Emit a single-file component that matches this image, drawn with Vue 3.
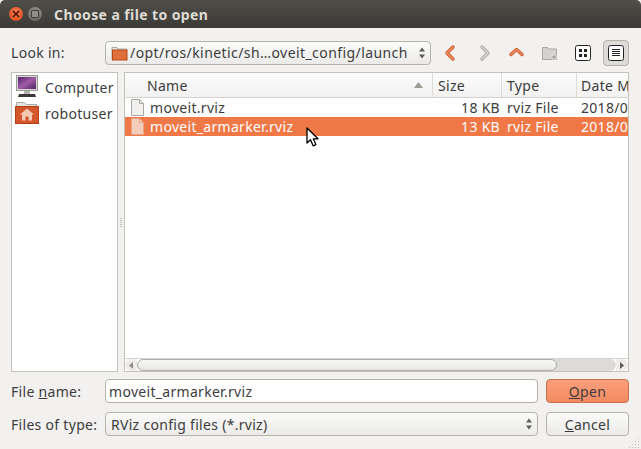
<template>
  <div class="dialog">
    <div class="titlebar">
      <span class="win-btn close">
        <svg width="10" height="10" viewBox="0 0 10 10"><path d="M2 2l6 6M8 2l-6 6" stroke="#4a1405" stroke-width="1.6" /></svg>
      </span>
      <span class="win-btn mini"><i></i></span>
      <span class="title">Choose a file to open</span>
    </div>

    <div class="content">
      <!-- look in -->
      <div class="row top-row">
        <label class="label">Look in:</label>
        <div class="combo path-combo">
          <svg class="folder" width="17" height="16" viewBox="0 0 17 16">
            <path d="M1 2.500h5l1 1.500h8.500v10.500H1z" fill="#e9e7e3" stroke="#a9a69f" />
            <rect x="1.500" y="5" width="14.500" height="10" fill="#e0703a" stroke="#b8441a" />
          </svg>
          <span class="combo-text">/opt/ros/kinetic/sh…oveit_config/launch</span>
          <svg class="spin" width="8" height="14" viewBox="0 0 8 14"><path d="M1 5.500l3-4 3 4zM1 8.500l3 4 3-4z" fill="#5e5c57" /></svg>
        </div>
        <div class="tools">
          <button class="tool">
            <svg width="16" height="18" viewBox="0 0 16 18">
              <path d="M10 3L4 9l6 6" fill="none" stroke="#cf5a2e" stroke-width="3.400" stroke-linejoin="round" stroke-linecap="round" />
              <path d="M10 3L4 9l6 6" fill="none" stroke="#f28f63" stroke-width="1.600" stroke-linejoin="round" stroke-linecap="round" />
            </svg>
          </button>
          <button class="tool">
            <svg width="16" height="18" viewBox="0 0 16 18">
              <path d="M6 3l6 6-6 6" fill="none" stroke="#aaa9a4" stroke-width="3.400" stroke-linejoin="round" stroke-linecap="round" />
              <path d="M6 3l6 6-6 6" fill="none" stroke="#d6d5d1" stroke-width="1.600" stroke-linejoin="round" stroke-linecap="round" />
            </svg>
          </button>
          <button class="tool">
            <svg width="18" height="14" viewBox="0 0 18 14">
              <path d="M3 8.500L8.500 3.500 14 8.500" fill="none" stroke="#cf5a2e" stroke-width="3.400" stroke-linejoin="round" stroke-linecap="round" />
              <path d="M3 8.500L8.500 3.500 14 8.500" fill="none" stroke="#f28f63" stroke-width="1.600" stroke-linejoin="round" stroke-linecap="round" />
            </svg>
          </button>
          <button class="tool">
            <svg width="18" height="16" viewBox="0 0 18 16">
              <path d="M1.500 2.500h5l1 1.500h8v10.500h-14z" fill="#d3d2ce" stroke="#a8a7a2" />
              <path d="M12 9h2v2h2v2h-2v2h-2v-2h-2v-2h2z" fill="#a6a5a0" stroke="#f2f1f0" stroke-width=".6" />
            </svg>
          </button>
          <button class="tool">
            <svg width="16" height="16" viewBox="0 0 16 16">
              <rect x=".5" y=".5" width="15" height="15" rx="2" fill="#fff" stroke="#24231f" />
              <path d="M4 4h3v3H4zM9 4h3v3H9zM4 9h3v3H4zM9 9h3v3H9z" fill="#24231f" />
            </svg>
          </button>
          <button class="tool active">
            <svg width="16" height="16" viewBox="0 0 16 16">
              <rect x=".5" y=".5" width="15" height="15" rx="2" fill="#fff" stroke="#24231f" />
              <path d="M4 4.500h8M4 6.500h8M4 8.500h8M4 10.500h8" stroke="#24231f" />
            </svg>
          </button>
        </div>
      </div>

      <!-- panes -->
      <div class="panes">
        <div class="sidebar">
          <div v-for="place in places" :key="place.name" class="place">
            <svg v-if="place.name === 'Computer'" width="24" height="24" viewBox="0 0 24 24">
              <rect x="1.500" y=".5" width="21" height="15" fill="#d8d8d4" stroke="#9a9a96" />
              <rect x="3" y="2" width="18" height="12" fill="url(#screen)" />
              <path d="M9 16h6v3H9z" fill="#b5b5b1" />
              <path d="M4 19h16l1 3H3z" fill="#3a3a38" />
              <defs>
                <linearGradient id="screen" x1="0" y1="0" x2="1" y2="1">
                  <stop offset="0" stop-color="#4f2468" />
                  <stop offset=".5" stop-color="#a35aa6" />
                  <stop offset="1" stop-color="#4b2560" />
                </linearGradient>
              </defs>
            </svg>
            <svg v-else width="24" height="24" viewBox="0 0 24 24">
              <path d="M1.500 1.500h8l2 2h10v19h-20z" fill="#e5e3df" stroke="#aba9a2" />
              <rect x=".5" y="5.500" width="23" height="17" fill="#d5562a" stroke="#b13f17" />
              <path d="M12 7.500l7 6h-2v6h-3.500v-4h-3v4H7v-6H5z" fill="#f3c9b2" />
            </svg>
            <span>{{ place.name }}</span>
          </div>
        </div>

        <div class="splitter"><i v-for="n in 5" :key="n"></i></div>

        <div class="list">
          <div class="header">
            <div class="col name-col">
              <span class="name-title">Name</span>
              <svg width="9" height="6" viewBox="0 0 9 6"><path d="M0 6l4.500-6L9 6z" fill="#9c9b96" /></svg>
            </div>
            <div class="col size-col">Size</div>
            <div class="col type-col">Type</div>
            <div class="col date-col">Date M</div>
          </div>
          <div class="rows">
            <div v-for="file in files" :key="file.name" class="file" :class="{ selected: file.selected }">
              <div class="cell name-col">
                <svg width="15" height="17" viewBox="0 0 15 17">
                  <path d="M1.500.5h8l4 4v12h-12z" :fill="file.selected ? '#f3cdbb' : '#f1f0ee'" :stroke="file.selected ? '#e9a487' : '#a9a8a4'" />
                  <path d="M9.500.5v4h4" fill="none" :stroke="file.selected ? '#e9a487' : '#a9a8a4'" />
                </svg>
                <span>{{ file.name }}</span>
              </div>
              <div class="cell size-col right">{{ file.size }}</div>
              <div class="cell type-col">rviz File</div>
              <div class="cell date-col">2018/0</div>
            </div>
          </div>
          <div class="hscroll">
            <span class="arrow-box left">
              <svg width="4" height="7" viewBox="0 0 4 7"><path d="M4 0v7L0 3.500z" fill="#8d8c87" /></svg>
            </span>
            <div class="track">
              <div class="thumb"></div>
            </div>
            <span class="arrow-box right">
              <svg width="4" height="7" viewBox="0 0 4 7"><path d="M0 0v7l4-3.500z" fill="#5e5c57" /></svg>
            </span>
          </div>
        </div>
      </div>

      <!-- file name -->
      <div class="row form-row">
        <label class="label">File <u>n</u>ame:</label>
        <input class="input" value="moveit_armarker.rviz" />
        <button class="btn primary"><u>O</u>pen</button>
      </div>
      <div class="row form-row">
        <label class="label">Files of type:</label>
        <div class="combo type-combo">
          <span class="combo-text">RViz config files (*.rviz)</span>
          <svg class="spin" width="8" height="14" viewBox="0 0 8 14"><path d="M1 5.500l3-4 3 4zM1 8.500l3 4 3-4z" fill="#5e5c57" /></svg>
        </div>
        <button class="btn"><u>C</u>ancel</button>
      </div>
    </div>

    <svg class="grip" width="11" height="11" viewBox="0 0 11 11">
      <path d="M9 1h1v1H9zM6 4h1v1H6zM9 4h1v1H9zM3 7h1v1H3zM6 7h1v1H6zM9 7h1v1H9zM0 10h1v1H0zM3 10h1v1H3zM6 10h1v1H6zM9 10h1v1H9z" fill="#c4c3bd" />
    </svg>
    <svg class="pointer" width="14" height="21" viewBox="0 0 14 21">
      <path d="M1 1v15l3.500-3.200 2.600 6 2.800-1.200-2.600-5.800H12z" fill="#fff" stroke="#000" stroke-width="1.300" stroke-linejoin="round" />
    </svg>
  </div>
</template>

<script setup>
const places = [{ name: 'Computer' }, { name: 'robotuser' }]

const files = [
  { name: 'moveit.rviz', size: '18 KB', selected: false },
  { name: 'moveit_armarker.rviz', size: '13 KB', selected: true }
]
</script>

<style scoped>
.dialog {
  position: relative;
  width: 641px;
  height: 449px;
  overflow: hidden;
  background: #f2f1f0;
  color: #3c3c3c;
  font-family: "Noto Sans", "DejaVu Sans", sans-serif;
  font-size: 14px;
  letter-spacing: 0.3px;
}

.titlebar {
  display: flex;
  align-items: center;
  height: 28px;
  padding-left: 9px;
  border-radius: 5px 5px 0 0;
  background: linear-gradient(#4f4e49, #3b3a36);
}

.win-btn {
  display: flex;
  align-items: center;
  justify-content: center;
  width: 14px;
  height: 14px;
  margin-right: 5px;
  border-radius: 50%;
}

.win-btn.close {
  background: radial-gradient(circle at 50% 35%, #f4784a, #d9481a);
}

.win-btn.mini {
  background: linear-gradient(#8a8983, #6a6964);
}

.win-btn.mini i {
  width: 6px;
  height: 6px;
  background: #8f8e88;
  border: 1px solid #3f3e3a;
  border-radius: 1px;
}

.title {
  margin-left: 7px;
  color: #dfdbd2;
  font-size: 14px;
  font-weight: 700;
  letter-spacing: 0.4px;
}

.content {
  display: flex;
  flex-direction: column;
  padding: 13px 12px 0 11px;
}

.row {
  display: flex;
  align-items: center;
}

.label {
  flex: none;
  width: 94px;
}

.top-row {
  height: 24px;
}

.top-row .label,
.path-combo .combo-text {
  padding-bottom: 1px;
}

.path-combo .combo-text {
  letter-spacing: 0.42px;
}

.combo {
  display: flex;
  align-items: center;
  height: 24px;
  box-sizing: border-box;
  border: 1px solid #b5b2ac;
  border-radius: 4px;
  background: linear-gradient(#fbfbfa, #ebeae8);
  color: #3c3c3c;
}

.path-combo {
  width: 326px;
  padding: 0 4px 0 5px;
}

.folder {
  flex: none;
  margin-right: 2px;
}

.combo-text {
  flex: 1;
  white-space: nowrap;
  overflow: hidden;
}

.spin {
  flex: none;
}

.tools {
  display: flex;
  align-items: center;
  margin-left: 7px;
}

.tool {
  display: flex;
  align-items: center;
  justify-content: center;
  width: 26px;
  height: 26px;
  margin-right: 7px;
  padding: 0;
  border: 1px solid transparent;
  border-radius: 4px;
  background: none;
}

.tool:last-child {
  margin-right: 0;
}

.tool.active {
  border-color: #b5b2ac;
  background: #dddcd9;
}

.panes {
  display: flex;
  height: 300px;
  margin-top: 7px;
}

.sidebar {
  flex: none;
  width: 107px;
  box-sizing: border-box;
  padding-top: 1px;
  border: 1px solid #c4c2bd;
  background: #fff;
}

.place {
  display: flex;
  align-items: center;
  gap: 6px;
  height: 26px;
  padding-left: 3px;
  white-space: nowrap;
}

.splitter {
  display: flex;
  flex: none;
  flex-direction: column;
  align-items: center;
  justify-content: center;
  gap: 1px;
  width: 6px;
}

.splitter i {
  width: 2px;
  height: 1px;
  background: #c4c3bd;
}

.list {
  display: flex;
  flex: 1;
  flex-direction: column;
  min-width: 0;
  border: 1px solid #c4c2bd;
  background: #fff;
}

.header {
  display: flex;
  flex: none;
  height: 24px;
  border-bottom: 1px solid #d5d3cf;
  background: linear-gradient(#fcfcfc, #f2f1f0);
}

.col {
  display: flex;
  align-items: center;
  box-sizing: border-box;
  border-right: 1px solid #dedcd8;
  white-space: nowrap;
}

.name-col {
  flex: none;
  width: 308px;
}

.size-col {
  flex: none;
  width: 69px;
}

.type-col {
  flex: none;
  width: 75px;
}

.date-col {
  flex: 1;
  min-width: 0;
  overflow: hidden;
}

.header .name-col {
  justify-content: space-between;
  padding: 0 9px 0 22px;
}

.header .size-col {
  padding-left: 5px;
}

.header .type-col {
  padding-left: 5px;
}

.header .date-col {
  padding-left: 4px;
  border-right: 0;
}

.rows {
  flex: 1;
}

.file {
  display: flex;
  height: 19px;
  color: #3c3c3c;
}

.file.selected {
  background: #f07746;
  color: #fff;
}

.cell {
  display: flex;
  align-items: center;
  box-sizing: border-box;
  white-space: nowrap;
  padding-left: 4px;
}

.cell.name-col {
  gap: 5px;
  padding-left: 5px;
}

.cell.type-col {
  padding-left: 5px;
}

.cell.right {
  justify-content: flex-end;
  padding-right: 2px;
}

.hscroll {
  display: flex;
  flex: none;
  align-items: center;
  height: 13px;
  box-sizing: border-box;
  background: #fff;
  border-top: 1px solid #d5d3cf;
}

.arrow-box {
  display: flex;
  flex: none;
  align-items: center;
  justify-content: center;
  width: 12px;
  height: 12px;
  background: #eeedeb;
}

.arrow-box.left {
  border-radius: 6px 0 0 6px;
}

.arrow-box.right {
  border-radius: 0 6px 6px 0;
}

.track {
  flex: 1;
  height: 12px;
  border-radius: 6px;
  background: #dcdbd8;
}

.thumb {
  width: 418px;
  height: 10px;
  border: 1px solid #b0aea8;
  border-radius: 6px;
  background: linear-gradient(#f8f8f7, #e8e7e5);
}

.form-row {
  height: 24px;
  margin-top: 7px;
}

.form-row + .form-row {
  margin-top: 9px;
}

.input {
  flex: none;
  width: 433px;
  height: 24px;
  box-sizing: border-box;
  padding: 0 3px;
  border: 1px solid #b5b2ac;
  border-radius: 4px;
  background: #fff;
  color: #3c3c3c;
  font: inherit;
  letter-spacing: inherit;
  outline: none;
}

.type-combo {
  flex: none;
  width: 433px;
  padding: 0 4px 0 5px;
}

.btn {
  flex: none;
  width: 83px;
  height: 24px;
  margin-left: 8px;
  padding: 0;
  border: 1px solid #b5b2ac;
  border-radius: 4px;
  background: linear-gradient(#fbfbfa, #ebeae8);
  color: #3c3c3c;
  font: inherit;
  letter-spacing: inherit;
}

.btn.primary {
  border-color: #c9714d;
  background: linear-gradient(#fb9f7c, #f38a61);
}

.grip {
  position: absolute;
  right: 1px;
  bottom: 1px;
}

.pointer {
  position: absolute;
  left: 306px;
  top: 127px;
}
</style>

<style>
html,
body {
  margin: 0;
  background: #fff;
}
</style>
